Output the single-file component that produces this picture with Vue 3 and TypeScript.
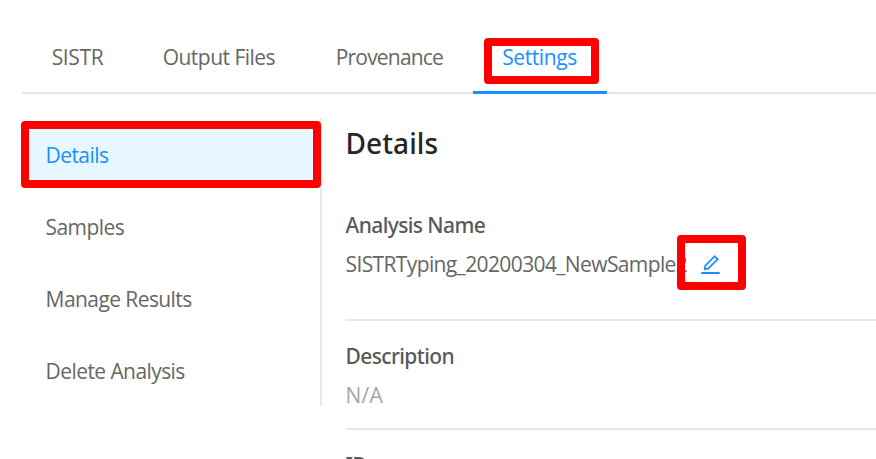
<script setup lang="ts">
import { ref } from 'vue'

interface Item {
  key: string
  label: string
}

const tabs: Item[] = [
  { key: 'sistr', label: 'SISTR' },
  { key: 'output', label: 'Output Files' },
  { key: 'provenance', label: 'Provenance' },
  { key: 'settings', label: 'Settings' },
]

const menu: Item[] = [
  { key: 'details', label: 'Details' },
  { key: 'samples', label: 'Samples' },
  { key: 'manage', label: 'Manage Results' },
  { key: 'delete', label: 'Delete Analysis' },
]

const activeTab = ref('settings')
const activeItem = ref('details')
</script>

<template>
  <div class="page">
    <nav class="tabs">
      <a
        v-for="tab in tabs"
        :key="tab.key"
        class="tab"
        :class="[tab.key, { active: tab.key === activeTab }]"
        @click="activeTab = tab.key"
      >
        {{ tab.label }}
        <span v-if="tab.key === 'settings'" class="mark mark-tab"></span>
      </a>
    </nav>

    <div class="body">
      <aside class="menu">
        <a
          v-for="item in menu"
          :key="item.key"
          class="item"
          :class="[item.key, { active: item.key === activeItem }]"
          @click="activeItem = item.key"
        >
          {{ item.label }}
          <span v-if="item.key === 'details'" class="mark mark-item"></span>
        </a>
      </aside>

      <main class="content">
        <h2 class="title">Details</h2>
        <dl class="list">
          <div class="entry first">
            <dt>Analysis Name</dt>
            <dd class="name">
              <span class="value">SISTRTyping_20200304_NewSample2</span>
              <button class="edit" aria-label="Edit">
                <svg viewBox="64 64 896 896" fill="currentColor">
                  <path d="M257.7 752c2 0 4-.2 6-.5L431.9 722c2-.4 3.9-1.3 5.3-2.8l423.9-423.9a9.96 9.96 0 000-14.1L694.9 114.9c-1.9-1.9-4.4-2.9-7.1-2.9s-5.2 1-7.1 2.9L256.8 538.8c-1.5 1.5-2.4 3.3-2.8 5.3l-29.5 168.2a33.5 33.5 0 009.4 29.8c6.6 6.4 14.9 9.9 23.8 9.9zm67.4-174.4L687.8 215l73.3 73.3-362.7 362.6-88.9 15.7 15.6-89zM880 836H144c-17.7 0-32 14.3-32 32v36c0 4.4 3.6 8 8 8h784c4.4 0 8-3.6 8-8v-36c0-17.7-14.3-32-32-32z" />
                </svg>
                <span class="mark mark-edit"></span>
              </button>
            </dd>
          </div>
          <div class="entry">
            <dt>Description</dt>
            <dd class="empty">N/A</dd>
          </div>
          <div class="entry">
            <dt>ID</dt>
          </div>
        </dl>
      </main>
    </div>
  </div>
</template>

<style>
body {
  background: #fff;
  overflow: hidden;
}
</style>

<style scoped>
.page {
  box-sizing: border-box;
  height: 459px;
  padding: 22px 0 0 22px;
  overflow: hidden;
  font: 21px/32px 'Open Sans', 'Noto Sans', sans-serif;
  color: #666;
}

.tabs {
  display: flex;
  box-sizing: border-box;
  height: 72px;
  border-bottom: 2px solid #e8e8e8;
}

.tab {
  position: relative;
  box-sizing: border-box;
  height: 72px;
  padding: 19px 0 0 29.7px;
  white-space: nowrap;
  cursor: pointer;
}

.sistr {
  width: 111px;
  letter-spacing: -0.35px;
}

.output {
  width: 173px;
  letter-spacing: -0.52px;
}

.provenance {
  width: 166.5px;
  letter-spacing: -0.8px;
}

.settings {
  width: 134.5px;
  letter-spacing: -0.4px;
}

.tab.active {
  border-bottom: 3px solid #1890ff;
}

.active {
  color: #1890ff;
}

.body {
  display: flex;
  gap: 23.5px;
  padding-top: 24px;
}

.menu {
  box-sizing: border-box;
  width: 300px;
  height: 288px;
  border-right: 2px solid #e8e8e8;
}

.item {
  position: relative;
  display: block;
  box-sizing: border-box;
  height: 60px;
  margin: 7px 0 12px;
  padding-left: 23.6px;
  line-height: 60px;
  letter-spacing: -0.58px;
  cursor: pointer;
}

.item.active {
  background: #e6f7ff;
}

.content {
  flex: 1;
}

.title {
  margin: 5px 0 0;
  font: 500 28px/40px 'Noto Sans', sans-serif;
  letter-spacing: 0.1px;
  color: #262626;
}

.list {
  margin: 0;
}

.entry {
  box-sizing: border-box;
  height: 109px;
  padding-top: 19px;
  border-bottom: 2px solid #e8e8e8;
}

.entry.first {
  height: 158px;
  padding-top: 46px;
}

dt {
  font: 500 21px/32px 'Noto Sans', sans-serif;
  letter-spacing: -0.6px;
  color: #595959;
}

dd {
  margin: 7px 0 0;
}

.name {
  display: flex;
  align-items: center;
}

.value {
  letter-spacing: -0.62px;
}

.empty {
  letter-spacing: 0.3px;
  color: #a6a6a6;
}

.edit {
  position: relative;
  display: flex;
  margin-left: 12.5px;
  padding: 0;
  border: 0;
  background: none;
  color: #1890ff;
}

.edit svg {
  width: 21px;
  height: 21px;
}

.mark {
  position: absolute;
  box-sizing: border-box;
  border: 8px solid #f00;
  border-radius: 4px;
}

.mark-tab {
  top: 16px;
  left: 11.5px;
  width: 115px;
  height: 46px;
}

.mark-item {
  top: -4px;
  left: -1px;
  z-index: 1;
  width: 300px;
  height: 67px;
}

.mark-edit {
  top: -19px;
  left: -22.5px;
  width: 69px;
  height: 55px;
}
</style>
